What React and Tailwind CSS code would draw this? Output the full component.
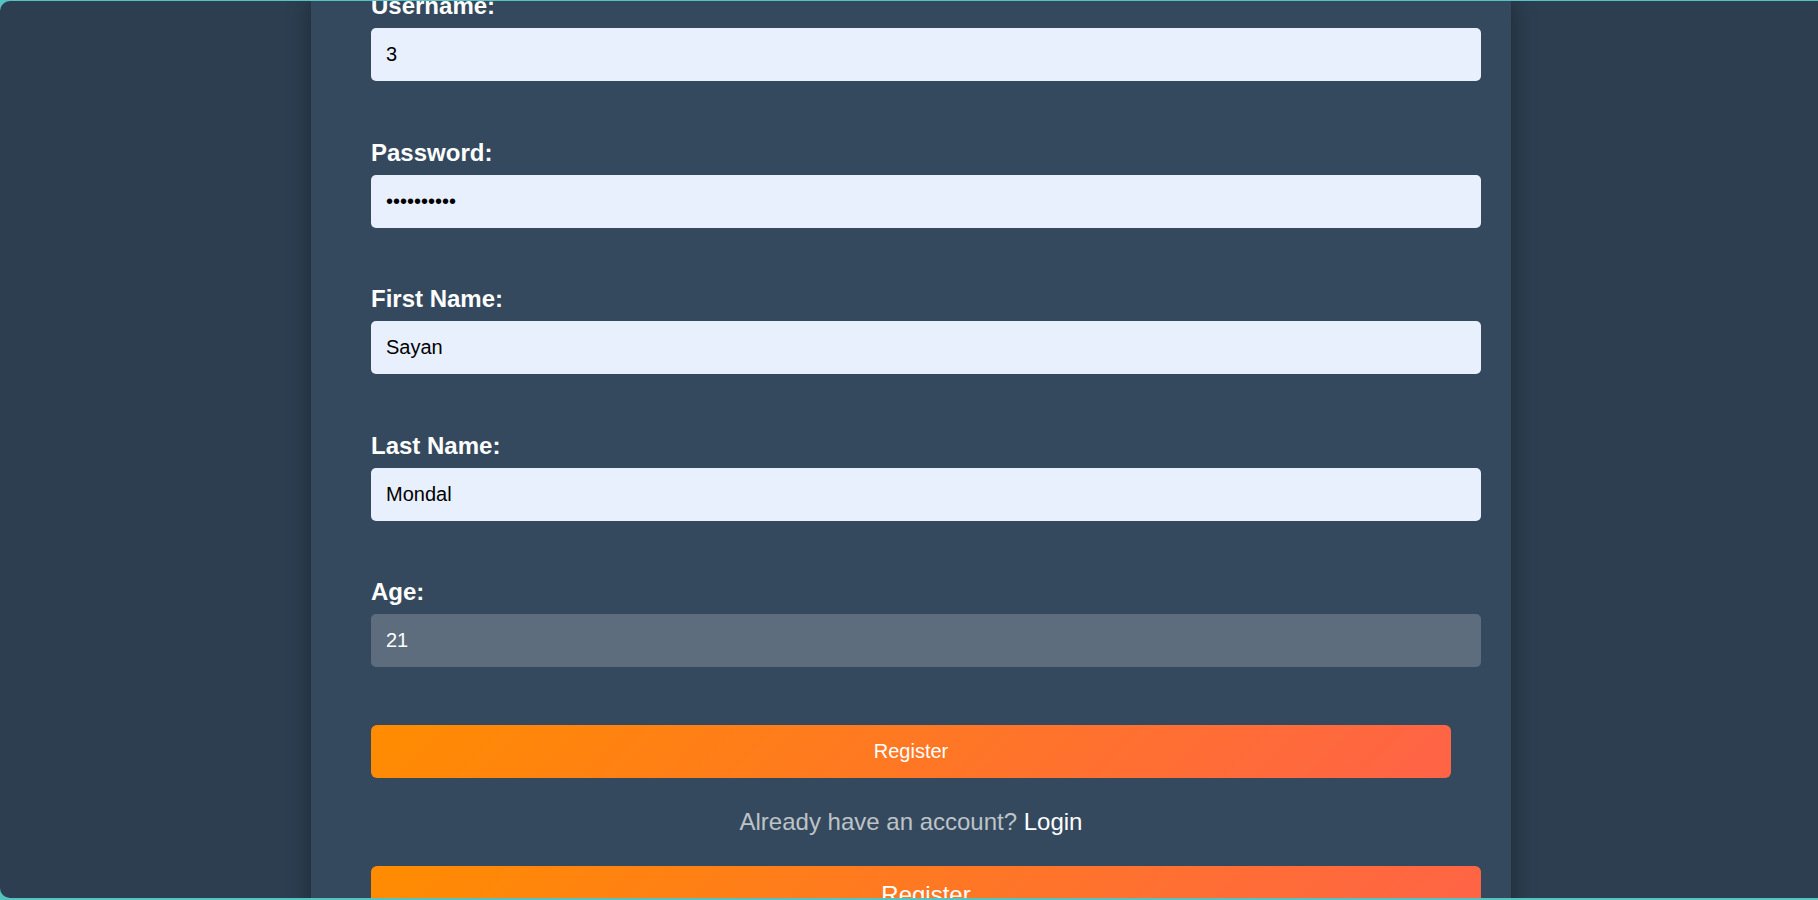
import React from "react";

function Field({ label, value, type = "text", dark = false }) {
  return (
    <div className="mb-[57.5px]">
      <label className="block text-[24px] leading-[28px] font-bold text-white mb-[8px]">{label}</label>
      <input
        type={type}
        value={value}
        readOnly
        className={
          dark
            ? "block box-content w-full px-[15px] py-[15px] h-[23px] text-[20px] leading-[23px] rounded-[5px] bg-[#5d6d7e] text-white outline-none border-0 font-['Liberation_Sans',Arial,sans-serif]"
            : "block box-content w-full px-[15px] py-[15px] h-[23px] text-[20px] leading-[23px] rounded-[5px] bg-[#e8f0fe] text-black outline-none border-0 font-['Liberation_Sans',Arial,sans-serif]"
        }
      />
    </div>
  );
}

export default function App() {
  return (
    <div className="h-[900px] w-full bg-[#55c4c0] pt-px pb-[2px] overflow-hidden font-['Liberation_Sans',Arial,sans-serif]">
      <div className="h-full bg-[#2c3e50] rounded-l-[10px] flex justify-center pl-[4px] overflow-hidden">
        <div className="w-[1200px] shrink-0 bg-[#34495e] px-[60px] shadow-[0_0_22px_rgba(0,0,0,0.35)] h-[1200px]">
          <form className="-mt-[9px]">
            <Field label="Username:" value="3" />
            <Field label="Password:" value="3333333333" type="password" />
            <Field label="First Name:" value="Sayan" />
            <Field label="Last Name:" value="Mondal" />
            <Field label="Age:" value="21" dark />
            <button
              type="button"
              className="block w-full h-[53px] rounded-[6px] text-white text-[20px] leading-[23px] bg-[linear-gradient(135deg,#ff8c00,#ff6347)] -mt-[57.5px] mt-0"
            >
              Register
            </button>
            <p className="mt-[30px] text-center text-[24px] leading-[28px] text-[#bdc3c7]">
              Already have an account? <span className="text-white">Login</span>
            </p>
            <button
              type="button"
              className="block box-content w-full px-[15px] py-[15px] h-[28px] mt-[30px] rounded-[6px] text-white text-[24px] leading-[28px] bg-[linear-gradient(135deg,#ff8c00,#ff6347)]"
            >
              Register
            </button>
          </form>
        </div>
      </div>
    </div>
  );
}
